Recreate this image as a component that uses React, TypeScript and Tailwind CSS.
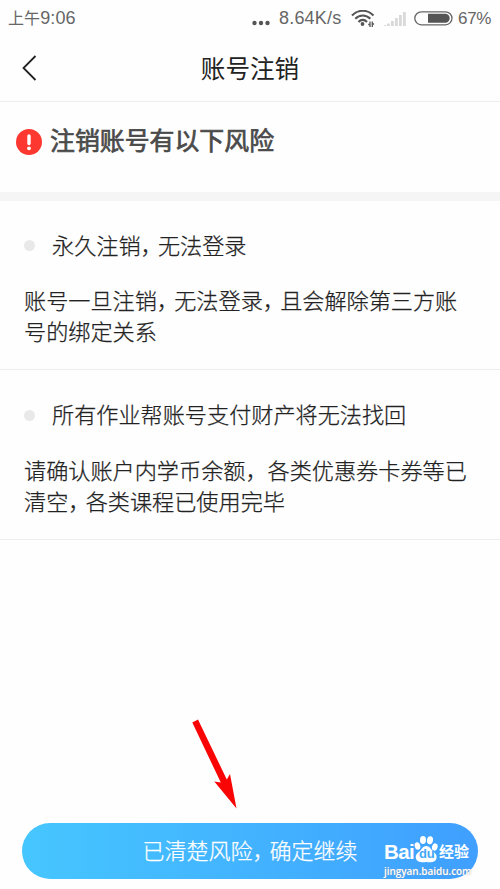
import type { ReactNode } from "react";

interface Risk {
  id: string;
  title: ReactNode;
  lines: ReactNode[];
}

// Full-width comma with its trailing space tightened
function Comma() {
  return <span className="tracking-[-4.8px]">，</span>;
}

const risks: Risk[] = [
  {
    id: "permanent",
    title: (
      <>
        永久注销
        <Comma />
        无法登录
      </>
    ),
    lines: [
      <>
        账号一旦注销
        <Comma />
        无法登录
        <Comma />
        且会解除第三方账
      </>,
      <>号的绑定关系</>,
    ],
  },
  {
    id: "assets",
    title: <>所有作业帮账号支付财产将无法找回</>,
    lines: [
      <>请确认账户内学币余额，各类优惠券卡券等已</>,
      <>
        清空
        <Comma />
        各类课程已使用完毕
      </>,
    ],
  },
];

function StatusBar() {
  return (
    <div className="flex h-[37px] items-center justify-between pl-2 pr-[9px] text-[#666]">
      <span className="whitespace-nowrap text-[18px] tracking-[0.1px]">
        <span className="text-[16px]">上午</span>9:06
      </span>
      <div className="flex items-center">
        <svg width="18" height="18" viewBox="0 0 18 18" fill="#555" className="mr-[9px]">
          <circle cx="2.500" cy="13" r="2.200" />
          <circle cx="9" cy="13" r="2.200" />
          <circle cx="15.500" cy="13" r="2.200" />
        </svg>
        <span className="w-[62px] whitespace-nowrap text-[18px] tracking-[0.2px]">8.64K/s</span>
        <svg width="24" height="18" viewBox="0 0 24 18" fill="none" stroke="#555" className="ml-[10px]">
          <g strokeWidth="2.100">
            <path d="M1 5.500C7-.8 16.500-.8 22.500 5.500" />
            <path d="M4.300 8.800C8.500 4.300 15 4.300 19.300 8.800" />
            <path d="M7.500 12C10 9.200 13.500 9.200 16 12" />
          </g>
          <circle cx="11.500" cy="14" r="1.900" fill="#555" stroke="none" />
          <path d="M19 11.500v5.500m-1.800-2.500h1.800M21.300 17v-5.500m1.800 2.500h-1.800" strokeWidth="1.300" />
        </svg>
        <svg width="22" height="16" viewBox="0 0 22 16" fill="#d9d9d9" className="ml-[9px]">
          <path d="M0 14h2v1H0zM3 12.500h2.800V15H3zM7 10h2.800v5H7zM11 7h2.800v8H11zM15 4h2.800v11H15zM19 1h2.800v14H19z" />
        </svg>
        <svg width="39" height="16" viewBox="0 0 39 16" className="ml-2">
          <rect x=".8" y=".8" width="37.200" height="13" rx="6.500" fill="none" stroke="#666" strokeWidth="1.300" />
          <path d="M14 2.800h17.200a4.500 4.500 0 0 1 0 9H14z" fill="#555" />
        </svg>
        <span className="ml-[5px] w-[33px] whitespace-nowrap text-[17px] tracking-[-0.3px]">67%</span>
      </div>
    </div>
  );
}

function RiskItem({ risk }: { risk: Risk }) {
  return (
    <section className="h-[169.400px] whitespace-nowrap border-b border-[#eee] px-6 pt-[29.200px] text-[22.150px] font-light text-[#222] [-webkit-text-stroke:0.25px_#222]">
      <div className="flex h-8 items-center">
        <span className="mb-px mr-[17px] size-[11px] shrink-0 rounded-full bg-[#e9e9e9]" />
        <h3>{risk.title}</h3>
      </div>
      <div className="mt-6">
        {risk.lines.map((line, i) => (
          <p key={i} className="leading-[31px]">
            {line}
          </p>
        ))}
      </div>
    </section>
  );
}

function Watermark() {
  return (
    <div className="absolute left-[384px] top-[835px] text-white">
      <div className="flex h-[29px] items-end whitespace-nowrap">
        <span className="w-[30px] text-[20.500px] font-bold leading-[24px] tracking-[-0.6px]">Bai</span>
        <div className="relative h-[29px] w-[25px]">
          <svg width="25" height="29" viewBox="0 0 25 29" fill="#fff">
            <ellipse cx="3.500" cy="11" rx="2.800" ry="3.800" transform="rotate(-15 3.500 11)" />
            <ellipse cx="9" cy="5" rx="3" ry="4" />
            <ellipse cx="16" cy="5.300" rx="3" ry="4" transform="rotate(10 16 5.300)" />
            <ellipse cx="20.800" cy="12" rx="2.800" ry="3.700" transform="rotate(15 20.800 12)" />
            <path d="M12.200 11c3.200 0 4.500 3 6.500 5 2.500 2.200 4.500 4 3.800 7.300-.9 4.200-4.800 4.400-10.300 3.600-5 .8-9.300.6-10.300-3.600-.7-3.500 1.700-5.300 4-7.300 2-1.900 3.100-5 6.300-5z" />
          </svg>
          <span className="absolute left-[5px] top-[11px] text-[13px] font-bold leading-4 tracking-[-0.3px] text-[#43a8f5]">du</span>
        </div>
        <span className="text-[15px] font-bold leading-[24px]">经验</span>
      </div>
      <p className="w-[90px] whitespace-nowrap font-['Open_Sans'] text-[10px] font-semibold leading-[15px] tracking-[-0.05px] [text-shadow:0_0_1px_#999]">
        jingyan.baidu.com
      </p>
    </div>
  );
}

export default function App() {
  return (
    <main className="relative flex h-[889px] w-[500px] flex-col overflow-hidden bg-[#fefefe] font-['Liberation_Sans','Noto_Sans_CJK_SC',sans-serif]">
      <StatusBar />
      <header className="grid h-[65px] grid-cols-[60px_1fr_60px] items-center border-b border-[#eee]">
        <svg width="16" height="26" viewBox="0 0 16 26" fill="none" stroke="#222" strokeWidth="1.800" className="mb-[2px] ml-[21px]">
          <path d="M14.500 1 2.500 13l12 12" />
        </svg>
        <h1 className="pt-[2px] text-center text-[24.600px] text-[#222]">账号注销</h1>
      </header>

      <div className="flex h-[90px] items-start pl-4 pt-[19px]">
        <svg width="26" height="26" viewBox="0 0 26 26" className="mt-[8px]">
          <circle cx="13" cy="13" r="13" fill="#fd3830" />
          <path d="M13 7v7.500" stroke="#fff" strokeWidth="3.400" strokeLinecap="round" />
          <circle cx="13" cy="19.300" r="1.900" fill="#fff" />
        </svg>
        <h2 className="ml-2 text-[24.900px] leading-10 text-[#4a4a4a] [-webkit-text-stroke:0.7px_#4a4a4a]">
          注销账号有以下风险
        </h2>
      </div>
      <div className="h-[9px] shrink-0 bg-[#f5f5f5]" />

      {risks.map((risk) => (
        <RiskItem key={risk.id} risk={risk} />
      ))}

      <button className="mx-[22px] mb-[10px] mt-auto h-14 shrink-0 whitespace-nowrap rounded-full bg-linear-to-r from-[#46c6ff] to-[#409fff] text-[22px] font-light text-white [-webkit-text-stroke:0.25px_#fff]">
        已清楚风险
        <Comma />
        确定继续
      </button>

      <Watermark />
      <svg width="48" height="92" viewBox="0 0 48 92" fill="#fa0505" className="absolute left-[190px] top-[718px]">
        <path d="M2.300 4.500 8 1.500 36.800 61.500 40 56 46.500 90.500 24.300 63.500l6.500 1z" />
      </svg>
    </main>
  );
}
